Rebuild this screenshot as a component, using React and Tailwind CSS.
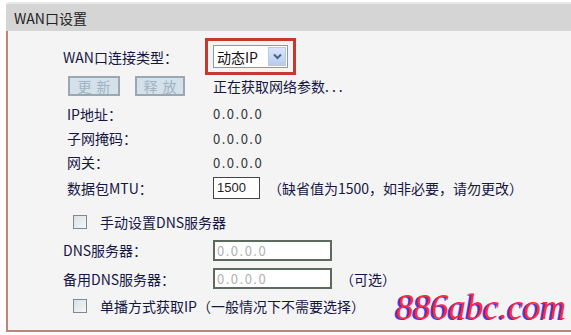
export default function App() {
  const font = "font-['Noto_Sans_CJK_SC','Noto_Sans',sans-serif]";
  const Label = ({ pl, w = "w-[205px]", children }) => (
    <div className={`${w} shrink-0 ${pl}`}>{children}</div>
  );
  const Zero = () => (
    <span className="tracking-[1.5px] text-[#333] text-[13px]">0.0.0.0</span>
  );
  const CheckBox = () => (
    <span className="w-[14px] h-[14px] border border-[#7d8a96] bg-gradient-to-br from-[#dcdfe3] to-[#f6f6f6] shrink-0" />
  );
  return (
    <div className={`w-[571px] h-[335px] bg-white relative overflow-hidden ${font} text-[14px] leading-none text-[#161644]`}>
      <div className="pt-[2px] pl-[6px]">
        <div className="h-[29px] bg-[#d5d5d5] border-t-2 border-[#e8e8e8] rounded-tl-[3px] flex items-center pl-[8px] text-[#222]">
          WAN口设置
        </div>
        <div className="h-[301px] bg-[#f4f4f4] border-l-2 border-b-2 border-[#b8877a] pt-[7px] flex flex-col">
          <div className="h-[37px] flex items-center">
            <Label w="w-[197px]" pl="pl-[55px]">WAN口连接类型：</Label>
            <div className="w-[91px] h-[37px] border-[3px] border-[#c8372d] pl-[5px] pt-[4px]">
              <div className="w-[75px] h-[23px] bg-white border border-[#7f9db9] flex items-center justify-between pl-[3px] pr-[1px] text-[#111]">
                <span>动态IP</span>
                <span className="w-[18px] h-[19px] bg-gradient-to-b from-[#dbe6fb] to-[#b7cbee] border border-[#b9c9e8] flex items-center justify-center">
                  <svg width="9" height="7" viewBox="0 0 9 7">
                    <path d="M1 1.5 L4.5 5 L8 1.5" fill="none" stroke="#4d6185" strokeWidth="2" />
                  </svg>
                </span>
              </div>
            </div>
          </div>
          <div className="h-[21px] flex items-center">
            <div className="pl-[60px] flex gap-[15px] shrink-0">
              <span className="w-[52px] h-[20px] bg-[#d4e1ea] border-2 border-[#9aa8b3] flex items-center justify-center text-[#9fb3c3] tracking-[5px] pl-[5px]">更新</span>
              <span className="w-[50px] h-[20px] bg-[#d4e1ea] border-2 border-[#9aa8b3] flex items-center justify-center text-[#9fb3c3] tracking-[5px] pl-[5px]">释放</span>
            </div>
            <span className="ml-[28px]">正在获取网络参数<span className="tracking-[3px]">...</span></span>
          </div>
          <div className="h-[25px] mt-[5px] flex items-center">
            <Label pl="pl-[59px]">IP地址：</Label>
            <Zero />
          </div>
          <div className="h-[24px] flex items-center">
            <Label pl="pl-[59px]">子网掩码：</Label>
            <Zero />
          </div>
          <div className="h-[24px] flex items-center">
            <Label pl="pl-[59px]">网关：</Label>
            <Zero />
          </div>
          <div className="h-[27px] flex items-center">
            <Label pl="pl-[59px]">数据包MTU：</Label>
            <div className="w-[47px] h-[22px] bg-white border border-[#444] flex items-center pl-[3px] font-['Liberation_Sans',sans-serif] text-[13px] text-[#222]">
              1500
            </div>
            <span className="ml-[8px]">（缺省值为1500，如非必要，请勿更改）</span>
          </div>
          <div className="h-[28px] mt-[7px] flex items-center pl-[65px] gap-[13px]">
            <CheckBox />
            <span>手动设置DNS服务器</span>
          </div>
          <div className="h-[28px] flex items-center">
            <Label pl="pl-[55px]">DNS服务器：</Label>
            <div className="w-[119px] h-[21px] bg-white border-2 border-[#5d6a60] flex items-center pl-[2px] tracking-[1.5px] text-[13px] text-[#b0b0b0]">
              0.0.0.0
            </div>
          </div>
          <div className="h-[29px] flex items-center">
            <Label pl="pl-[55px]">备用DNS服务器：</Label>
            <div className="w-[119px] h-[21px] bg-white border-2 border-[#5d6a60] flex items-center pl-[2px] tracking-[1.5px] text-[13px] text-[#b0b0b0]">
              0.0.0.0
            </div>
            <span className="ml-[8px]">（可选）</span>
          </div>
          <div className="h-[26px] flex items-center pl-[65px] gap-[13px]">
            <CheckBox />
            <span>单播方式获取IP（一般情况下不需要选择）</span>
          </div>
        </div>
      </div>
      <div className="absolute left-[396px] top-[288px] whitespace-nowrap font-['Liberation_Serif',serif] italic text-[35px] leading-[40px] text-[#ff2a3c] [text-shadow:-2px_1px_0_#3c3cff]">
        886abc.com
      </div>
    </div>
  );
}
